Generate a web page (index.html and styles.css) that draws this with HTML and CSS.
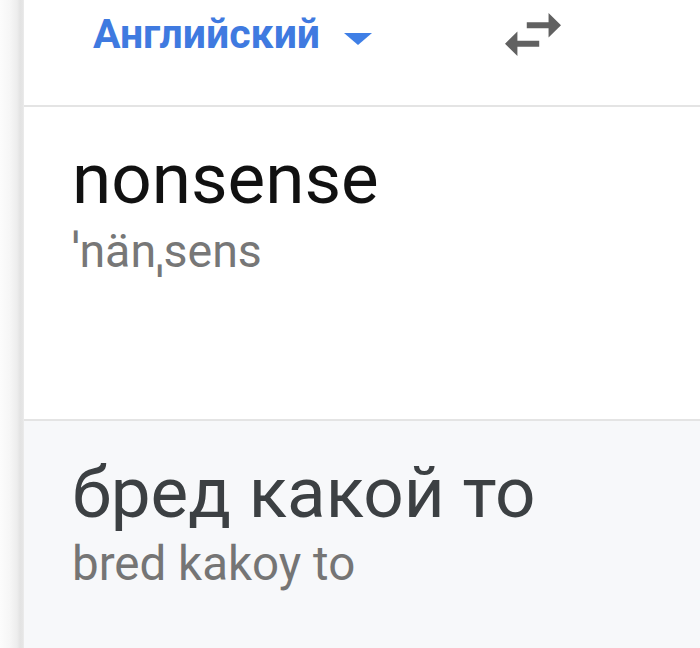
FILE: index.html
```html
<!DOCTYPE html>
<html lang="ru">
<head>
<meta charset="utf-8">
<link rel="stylesheet" href="styles.css">
</head>
<body>
<div class="edge"></div>
<div class="main">
  <div class="header">
    <span class="lang">Английский</span>
    <svg class="drop" viewBox="0 0 28 12" width="28" height="12"><polygon points="0,0 28,0 14,12" fill="#3f7fe6"/></svg>
    <svg class="swap" viewBox="3 5 18 14" width="56" height="43" preserveAspectRatio="none"><path d="M6.99 11L3 15l3.99 4v-3H14v-2H6.99v-3zM21 9l-4-4v3h-7v2h7v3l4-4z" fill="#616161"/></svg>
  </div>
  <div class="input">
    <div class="source">nonsense</div>
    <div class="phon">ˈnänˌsens</div>
  </div>
  <div class="output">
    <div class="trans">бред какой то</div>
    <div class="translit">bred kakoy to</div>
  </div>
</div>
</body>
</html>
```

FILE: styles.css
```css
html, body {
  margin: 0;
  padding: 0;
}
body {
  width: 700px;
  height: 648px;
  overflow: hidden;
  display: flex;
  font-family: Roboto, "Noto Sans", sans-serif;
  background: #fff;
}
.edge {
  width: 24px;
  flex: none;
  background: linear-gradient(to right, #fcfcfc 0px, #f6f6f6 10px, #ededed 17px, #e3e3e3 20px, #e6e6e6 23px, #eeeeee 24px);
}
.main {
  flex: 1;
  display: flex;
  flex-direction: column;
}
.header {
  height: 105px;
  flex: none;
  display: flex;
  align-items: flex-start;
  padding-left: 69px;
  border-bottom: 2px solid #e4e4e4;
  background: #fff;
}
.lang {
  font-weight: 700;
  font-size: 41px;
  line-height: 48px;
  margin-top: 10px;
  color: #3f7ae0;
}
.drop {
  margin-left: 24px;
  margin-top: 33px;
  flex: none;
}
.swap {
  margin-left: 133px;
  margin-top: 13px;
  flex: none;
}
.input {
  height: 314px;
  flex: none;
  box-sizing: border-box;
  padding: 30px 0 0 48px;
  border-bottom: 2px solid #e4e4e4;
  background: #fff;
}
.source {
  font-size: 71px;
  line-height: 84px;
  color: #111;
}
.phon {
  font-size: 46.5px;
  line-height: 54px;
  margin-top: 3px;
  color: #777;
}
.output {
  flex: 1;
  background: #f7f8fa;
  padding: 30px 0 0 48px;
}
.trans {
  font-size: 71px;
  line-height: 84px;
  color: #3c4043;
}
.translit {
  font-size: 47.5px;
  line-height: 56px;
  margin-top: 1px;
  color: #757575;
}
```
